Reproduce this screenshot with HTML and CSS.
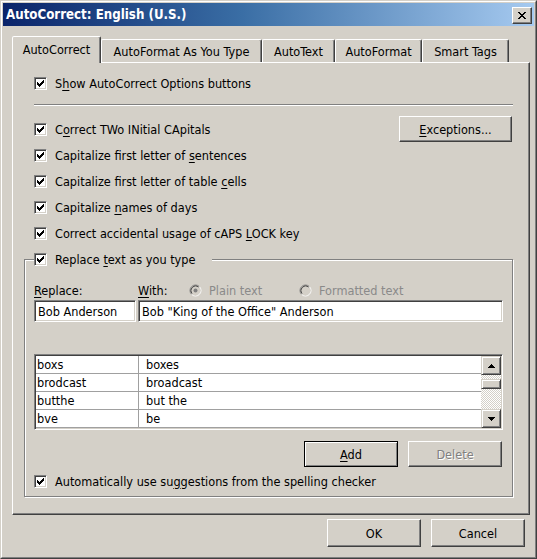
FILE: index.html
```html
<!DOCTYPE html>
<html>
<head>
<meta charset="utf-8">
<title>AutoCorrect</title>
<link rel="stylesheet" href="styles.css">
</head>
<body>
<div class="window">
  <div class="frame">
    <div class="titlebar">
      <span class="title">AutoCorrect: English (U.S.)</span>
      <span class="closebtn">
        <svg width="8" height="7" viewBox="0 0 8 7" shape-rendering="crispEdges">
          <rect x="0" y="0" width="2" height="1"/><rect x="6" y="0" width="2" height="1"/>
          <rect x="1" y="1" width="2" height="1"/><rect x="5" y="1" width="2" height="1"/>
          <rect x="2" y="2" width="4" height="1"/>
          <rect x="3" y="3" width="2" height="1"/>
          <rect x="2" y="4" width="4" height="1"/>
          <rect x="1" y="5" width="2" height="1"/><rect x="5" y="5" width="2" height="1"/>
          <rect x="0" y="6" width="2" height="1"/><rect x="6" y="6" width="2" height="1"/>
        </svg>
      </span>
    </div>
    <div class="client">
      <div class="tabs">
        <div class="tab sel t1">AutoCorrect</div>
        <div class="tab t2">AutoFormat As You Type</div>
        <div class="tab t3">AutoText</div>
        <div class="tab t4">AutoFormat</div>
        <div class="tab t5">Smart Tags</div>
      </div>
      <div class="panel">
        <div class="row">
          <span class="cb"><svg class="chk" width="7" height="7" viewBox="0 0 7 7" shape-rendering="crispEdges"><rect x="6" y="0" width="1" height="1"/><rect x="5" y="1" width="2" height="1"/><rect x="0" y="2" width="1" height="1"/><rect x="4" y="2" width="3" height="1"/><rect x="0" y="3" width="2" height="1"/><rect x="3" y="3" width="3" height="1"/><rect x="0" y="4" width="5" height="1"/><rect x="1" y="5" width="3" height="1"/><rect x="2" y="6" width="1" height="1"/></svg></span>
          <span>S<u>h</u>ow AutoCorrect Options buttons</span>
        </div>
        <div class="sep"></div>
        <div class="row row-gap">
          <span class="cb"><svg class="chk" width="7" height="7" viewBox="0 0 7 7" shape-rendering="crispEdges"><rect x="6" y="0" width="1" height="1"/><rect x="5" y="1" width="2" height="1"/><rect x="0" y="2" width="1" height="1"/><rect x="4" y="2" width="3" height="1"/><rect x="0" y="3" width="2" height="1"/><rect x="3" y="3" width="3" height="1"/><rect x="0" y="4" width="5" height="1"/><rect x="1" y="5" width="3" height="1"/><rect x="2" y="6" width="1" height="1"/></svg></span>
          <span>C<u>o</u>rrect TWo INitial CApitals</span>
          <span class="btn exc"><span><u>E</u>xceptions...</span></span>
        </div>
        <div class="row">
          <span class="cb"><svg class="chk" width="7" height="7" viewBox="0 0 7 7" shape-rendering="crispEdges"><rect x="6" y="0" width="1" height="1"/><rect x="5" y="1" width="2" height="1"/><rect x="0" y="2" width="1" height="1"/><rect x="4" y="2" width="3" height="1"/><rect x="0" y="3" width="2" height="1"/><rect x="3" y="3" width="3" height="1"/><rect x="0" y="4" width="5" height="1"/><rect x="1" y="5" width="3" height="1"/><rect x="2" y="6" width="1" height="1"/></svg></span>
          <span>Capitalize first letter of <u>s</u>entences</span>
        </div>
        <div class="row">
          <span class="cb"><svg class="chk" width="7" height="7" viewBox="0 0 7 7" shape-rendering="crispEdges"><rect x="6" y="0" width="1" height="1"/><rect x="5" y="1" width="2" height="1"/><rect x="0" y="2" width="1" height="1"/><rect x="4" y="2" width="3" height="1"/><rect x="0" y="3" width="2" height="1"/><rect x="3" y="3" width="3" height="1"/><rect x="0" y="4" width="5" height="1"/><rect x="1" y="5" width="3" height="1"/><rect x="2" y="6" width="1" height="1"/></svg></span>
          <span>Capitalize first letter of table <u>c</u>ells</span>
        </div>
        <div class="row">
          <span class="cb"><svg class="chk" width="7" height="7" viewBox="0 0 7 7" shape-rendering="crispEdges"><rect x="6" y="0" width="1" height="1"/><rect x="5" y="1" width="2" height="1"/><rect x="0" y="2" width="1" height="1"/><rect x="4" y="2" width="3" height="1"/><rect x="0" y="3" width="2" height="1"/><rect x="3" y="3" width="3" height="1"/><rect x="0" y="4" width="5" height="1"/><rect x="1" y="5" width="3" height="1"/><rect x="2" y="6" width="1" height="1"/></svg></span>
          <span>Capitalize <u>n</u>ames of days</span>
        </div>
        <div class="row">
          <span class="cb"><svg class="chk" width="7" height="7" viewBox="0 0 7 7" shape-rendering="crispEdges"><rect x="6" y="0" width="1" height="1"/><rect x="5" y="1" width="2" height="1"/><rect x="0" y="2" width="1" height="1"/><rect x="4" y="2" width="3" height="1"/><rect x="0" y="3" width="2" height="1"/><rect x="3" y="3" width="3" height="1"/><rect x="0" y="4" width="5" height="1"/><rect x="1" y="5" width="3" height="1"/><rect x="2" y="6" width="1" height="1"/></svg></span>
          <span>Correct accidental usage of cAPS <u>L</u>OCK key</span>
        </div>
        <fieldset class="group">
          <legend class="legend">
            <span class="cb"><svg class="chk" width="7" height="7" viewBox="0 0 7 7" shape-rendering="crispEdges"><rect x="6" y="0" width="1" height="1"/><rect x="5" y="1" width="2" height="1"/><rect x="0" y="2" width="1" height="1"/><rect x="4" y="2" width="3" height="1"/><rect x="0" y="3" width="2" height="1"/><rect x="3" y="3" width="3" height="1"/><rect x="0" y="4" width="5" height="1"/><rect x="1" y="5" width="3" height="1"/><rect x="2" y="6" width="1" height="1"/></svg></span>
            <span>Replace <u>t</u>ext as you type</span>
          </legend>
          <div class="labels">
            <span class="l-replace"><u>R</u>eplace:</span>
            <span class="l-with"><u>W</u>ith:</span>
            <svg class="radio" width="13" height="13" viewBox="0 0 13 13">
              <circle cx="6.5" cy="6.5" r="5" fill="#d4d0c8"/>
              <path d="M2.61 10.39 A5.5 5.5 0 0 1 10.39 2.61" fill="none" stroke="#808080"/>
              <path d="M10.39 2.61 A5.5 5.5 0 0 1 2.61 10.39" fill="none" stroke="#ffffff"/>
              <path d="M3.32 9.68 A4.5 4.5 0 0 1 9.68 3.32" fill="none" stroke="#404040"/>
              <path d="M9.68 3.32 A4.5 4.5 0 0 1 3.32 9.68" fill="none" stroke="#d4d0c8"/>
              <circle cx="6.5" cy="6.5" r="2" fill="#808080"/>
            </svg>
            <span class="dis r1">Plain text</span>
            <svg class="radio" width="13" height="13" viewBox="0 0 13 13">
              <circle cx="6.5" cy="6.5" r="5" fill="#d4d0c8"/>
              <path d="M2.61 10.39 A5.5 5.5 0 0 1 10.39 2.61" fill="none" stroke="#808080"/>
              <path d="M10.39 2.61 A5.5 5.5 0 0 1 2.61 10.39" fill="none" stroke="#ffffff"/>
              <path d="M3.32 9.68 A4.5 4.5 0 0 1 9.68 3.32" fill="none" stroke="#404040"/>
              <path d="M9.68 3.32 A4.5 4.5 0 0 1 3.32 9.68" fill="none" stroke="#d4d0c8"/>
            </svg>
            <span class="dis">Formatted text</span>
          </div>
          <div class="inputs">
            <div class="field f1">Bob Anderson</div>
            <div class="field f2">Bob "King of the Office" Anderson</div>
          </div>
          <div class="list">
            <div class="rows">
              <div class="lrow"><span class="c1">boxs</span><span class="c2">boxes</span></div>
              <div class="lrow"><span class="c1">brodcast</span><span class="c2">broadcast</span></div>
              <div class="lrow"><span class="c1">butthe</span><span class="c2">but the</span></div>
              <div class="lrow"><span class="c1">bve</span><span class="c2">be</span></div>
            </div>
            <div class="scroll">
              <div class="sbtn">
                <svg width="7" height="4" viewBox="0 0 7 4" shape-rendering="crispEdges"><rect x="3" y="0" width="1" height="1"/><rect x="2" y="1" width="3" height="1"/><rect x="1" y="2" width="5" height="1"/><rect x="0" y="3" width="7" height="1"/></svg>
              </div>
              <div class="track"><div class="thumb"></div></div>
              <div class="sbtn">
                <svg width="7" height="4" viewBox="0 0 7 4" shape-rendering="crispEdges"><rect x="0" y="0" width="7" height="1"/><rect x="1" y="1" width="5" height="1"/><rect x="2" y="2" width="3" height="1"/><rect x="3" y="3" width="1" height="1"/></svg>
              </div>
            </div>
          </div>
          <div class="btnrow">
            <span class="btn def"><span><u>A</u>dd</span></span>
            <span class="btn disabled"><span>Delete</span></span>
          </div>
          <div class="row auto">
            <span class="cb"><svg class="chk" width="7" height="7" viewBox="0 0 7 7" shape-rendering="crispEdges"><rect x="6" y="0" width="1" height="1"/><rect x="5" y="1" width="2" height="1"/><rect x="0" y="2" width="1" height="1"/><rect x="4" y="2" width="3" height="1"/><rect x="0" y="3" width="2" height="1"/><rect x="3" y="3" width="3" height="1"/><rect x="0" y="4" width="5" height="1"/><rect x="1" y="5" width="3" height="1"/><rect x="2" y="6" width="1" height="1"/></svg></span>
            <span>Automatically use su<u>g</u>gestions from the spelling checker</span>
          </div>
        </fieldset>
      </div>
      <div class="footer">
        <span class="btn big"><span>OK</span></span>
        <span class="btn big"><span>Cancel</span></span>
      </div>
    </div>
  </div>
</div>
</body>
</html>
```
FILE: styles.css
```css
* { box-sizing: border-box; }
html, body { margin: 0; padding: 0; background: #d4d0c8; }
body {
  font-family: "DejaVu Sans Condensed", "DejaVu Sans", "Liberation Sans", sans-serif;
  font-stretch: condensed;
  font-size: 12.6px;
  color: #000;
}
u { text-decoration: underline; text-underline-offset: 2px; }

.window {
  width: 537px; height: 559px;
  border: 1px solid; border-color: #d4d0c8 #404040 #404040 #d4d0c8;
  background: #d4d0c8;
}
.frame {
  height: 100%;
  border: 1px solid; border-color: #fff #808080 #808080 #fff;
  padding: 1px;
  display: flex; flex-direction: column;
}

.titlebar {
  height: 23px; flex: none;
  display: flex; align-items: center;
  padding-left: 3px;
  background: linear-gradient(to right, #0a246a 0%, #3a6ea5 45%, #a6caf0 100%);
}
.title { color: #fff; font-weight: bold; font-size: 13.2px; }
.closebtn {
  margin-left: auto; margin-right: 2px; align-self: flex-start; margin-top: 4px;
  width: 20px; height: 17px;
  background: #d4d0c8;
  border: 1px solid; border-color: #fff #404040 #404040 #fff;
  box-shadow: inset -1px -1px 0 #808080;
  display: flex; align-items: center; justify-content: center;
}
.closebtn svg { display: block; fill: #000; }

.client {
  flex: 1;
  display: flex; flex-direction: column;
  padding: 0 4px 0 9px;
}

.tabs { display: flex; align-items: flex-end; height: 26px; margin-top: 10px; flex: none; }
.tab {
  height: 23px;
  border: 1px solid; border-bottom: none;
  border-color: #fff #404040 transparent #fff;
  border-radius: 2px 2px 0 0;
  box-shadow: inset -1px 0 0 #808080;
  display: flex; align-items: center; justify-content: center;
  padding-top: 1px;
  white-space: nowrap;
}
.tab.sel {
  height: 27px; margin-bottom: -1px;
  position: relative; z-index: 1;
  background: #d4d0c8;
  padding-top: 0; padding-bottom: 1px;
}
.t1 { width: 89px; }
.t2 { width: 161px; }
.t3 { width: 73px; }
.t4 { width: 87px; }
.t5 { width: 87px; }

.panel {
  height: 453px; flex: none;
  border: 1px solid; border-color: #fff #404040 #404040 #fff;
  box-shadow: inset -1px -1px 0 #808080;
  padding: 7px 16px 0 21px;
}

.row { height: 26px; display: flex; align-items: center; white-space: nowrap; }
.row-gap { margin-top: 10px; }
.sep { margin-top: 8px; height: 2px; border-top: 1px solid #808080; border-bottom: 1px solid #fff; }

.cb {
  flex: none;
  width: 13px; height: 13px;
  margin-right: 8px;
  background: #fff;
  border: 1px solid; border-color: #808080 #fff #fff #808080;
  box-shadow: inset 1px 1px 0 #404040, inset -1px -1px 0 #d4d0c8;
  padding: 2px;
}
.chk { display: block; fill: #000; }

.btn {
  background: #d4d0c8;
  border: 1px solid; border-color: #fff #404040 #404040 #fff;
  box-shadow: inset -1px -1px 0 #808080;
  display: flex; align-items: center; justify-content: center;
  height: 26px; width: 94px;
  white-space: nowrap;
}
.btn.def { border-color: #000; box-shadow: inset 1px 1px 0 #fff, inset -1px -1px 0 #808080; }
.btn.disabled { color: #808080; text-shadow: 1px 1px 0 #fff; }
.exc { margin-left: auto; margin-right: 1px; width: 113px; }

.group {
  margin: 0 0 0 -10px;
  padding: 0 9px 2px 9px;
  border: 1px solid #808080;
  box-shadow: inset 1px 1px 0 #fff, 1px 1px 0 #fff;
  min-width: 0;
}
.legend {
  padding: 0; margin: 0;
  width: 178px; height: 26px;
  display: flex; align-items: center;
  background: #d4d0c8;
  white-space: nowrap;
}

.labels { margin-top: 10px; height: 16px; display: flex; align-items: center; white-space: nowrap; }
.l-replace { width: 104px; }
.l-with { width: 51px; }
.radio { display: block; flex: none; margin-right: 7px; }
.dis { color: #8a8a8a; }
.r1 { width: 90px; }

.inputs { margin-top: 2px; display: flex; gap: 2px; height: 22px; }
.field {
  height: 22px;
  background: #fff;
  border: 1px solid; border-color: #808080 #fff #fff #808080;
  box-shadow: inset 1px 1px 0 #404040, inset -1px -1px 0 #d4d0c8;
  padding: 0 3px;
  display: flex; align-items: center;
  white-space: nowrap;
}
.f1 { width: 102px; }
.f2 { flex: 1; }

.list {
  margin-top: 32px;
  height: 76px;
  display: flex;
  background: #fff;
  border: 1px solid; border-color: #808080 #fff #fff #808080;
  box-shadow: inset 1px 1px 0 #404040, inset -1px -1px 0 #d4d0c8;
  padding: 1px;
}
.rows { flex: 1; display: flex; flex-direction: column; }
.lrow { height: 18px; display: flex; border-bottom: 1px solid #a0a0a0; }
.c1 { width: 103px; border-right: 1px solid #a0a0a0; padding-left: 1px; display: flex; align-items: center; }
.c2 { flex: 1; padding-left: 7px; display: flex; align-items: center; }

.scroll { width: 20px; flex: none; display: flex; flex-direction: column; }
.sbtn {
  height: 19px; flex: none;
  background: #d4d0c8;
  border: 1px solid; border-color: #d4d0c8 #404040 #404040 #d4d0c8;
  box-shadow: inset 1px 1px 0 #fff, inset -1px -1px 0 #808080;
  display: flex; align-items: center; justify-content: center;
}
.sbtn svg { display: block; fill: #000; }
.track {
  flex: 1;
  background: repeating-conic-gradient(#ffffff 0 25%, #d4d0c8 0 50%) 0 0 / 2px 2px;
  padding-top: 4px;
}
.thumb {
  height: 10px;
  background: #d4d0c8;
  border: 1px solid; border-color: #d4d0c8 #404040 #404040 #d4d0c8;
  box-shadow: inset 1px 1px 0 #fff, inset -1px -1px 0 #808080;
}

.btnrow { margin-top: 11px; display: flex; justify-content: flex-end; gap: 10px; padding-right: 1px; }
.auto { margin-top: 1px; }

.footer { margin-top: 4px; display: flex; justify-content: flex-end; gap: 10px; padding-right: 5px; }
.btn.big { height: 28px; }
```
